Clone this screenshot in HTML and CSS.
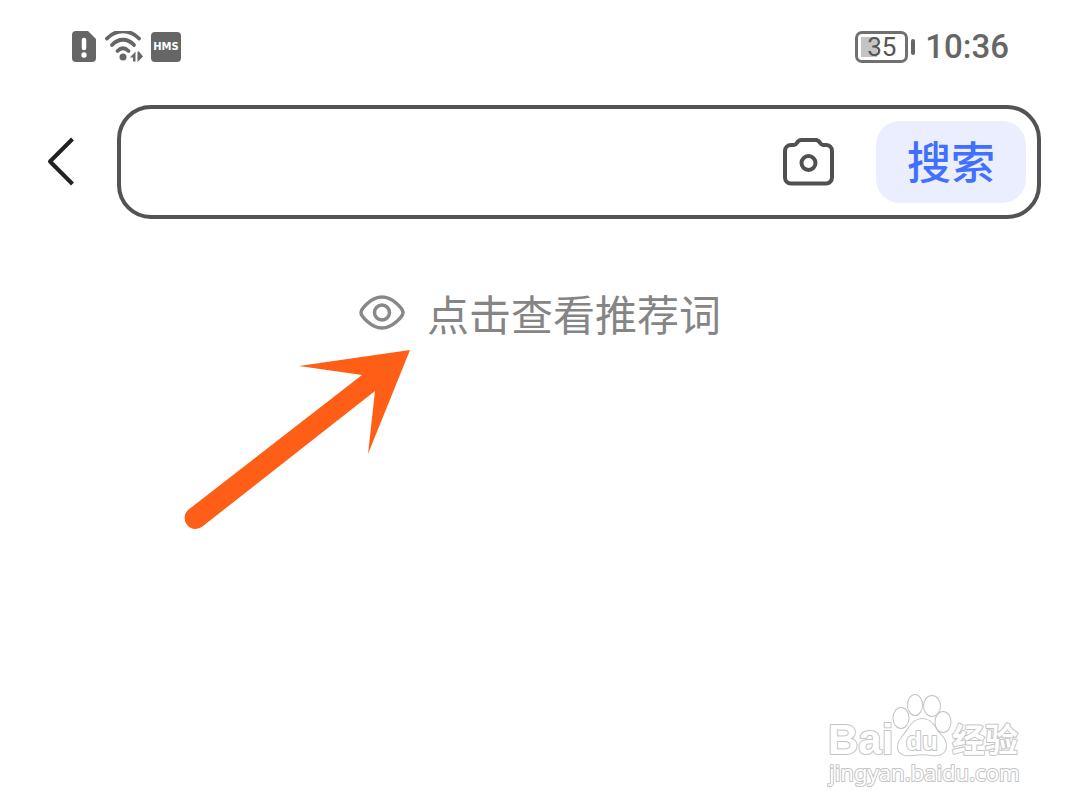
FILE: index.html
```html
<!DOCTYPE html>
<html lang="zh-CN">
  <head>
    <meta charset="UTF-8" />
    <meta name="viewport" content="width=device-width, initial-scale=1.0" />
    <title>搜索</title>
    <link rel="stylesheet" href="styles.css" />
  </head>
  <body>
    <header class="status-bar">
      <div class="status-left">
        <svg width="26" height="32" viewBox="0 0 26 32" aria-hidden="true">
          <path
            d="M5 0H17L25 8V27a4 4 0 0 1-4 4H5a4 4 0 0 1-4-4V4a4 4 0 0 1 4-4z"
            fill="#666"
          />
          <path d="M13 9v8" stroke="#fff" stroke-width="4.500" stroke-linecap="round" />
          <circle cx="13" cy="24" r="2.700" fill="#fff" />
        </svg>
        <svg width="38" height="32" viewBox="0 0 38 32" aria-hidden="true">
          <g fill="none" stroke="#666" stroke-width="3.800" stroke-linecap="round">
            <path d="M2 7.500C11-2 25-2 34 7.500" />
            <path d="M7 14C13.500 7 22.500 7 29 14" />
            <path d="M12.500 20C16 16.500 20 16.500 23.500 20" />
          </g>
          <circle cx="18" cy="26" r="3.500" fill="#666" />
          <path d="M30.500 20.500v10H28v-4h-3zM32.500 20.500H34l4 5-5.500 5.500z" fill="#666" />
        </svg>
        <span class="hms">HMS</span>
      </div>
      <div class="status-right">
        <div class="battery"><span class="battery-box">35</span></div>
        <time class="clock">10:36</time>
      </div>
    </header>

    <main>
      <form class="search-row" onsubmit="return false;">
        <button type="button" class="back" aria-label="返回">
          <svg width="28" height="50" viewBox="0 0 28 50">
            <path d="M25.500 2 3 24.500 25.500 47" fill="none" stroke="#222" stroke-width="4" stroke-linejoin="round" />
          </svg>
        </button>
        <div class="search-box">
          <input type="text" class="search-input" aria-label="搜索" />
          <button type="button" class="camera" aria-label="拍照搜索">
            <svg width="52" height="50" viewBox="0 0 52 50">
              <path
                d="M9 8H12C15 8 15 3 19 3H34C38 3 38 8 41 8H44a6 6 0 0 1 6 6V40.500a6 6 0 0 1-6 6H9a6 6 0 0 1-6-6V14a6 6 0 0 1 6-6z"
                fill="none"
                stroke="#505050"
                stroke-width="4"
              />
              <circle cx="26.500" cy="26" r="7" fill="none" stroke="#505050" stroke-width="4" />
            </svg>
          </button>
          <button type="submit" class="search-button">搜索</button>
        </div>
      </form>

      <button type="button" class="hint">
        <svg width="46" height="36" viewBox="0 0 46 36" aria-hidden="true">
          <path
            d="M2 17.500C2 14 12 2 23 2S44 14 44 17.500 34 33 23 33 2 21 2 17.500z"
            fill="none"
            stroke="#888"
            stroke-width="3.500"
          />
          <circle cx="23" cy="17.500" r="7.500" fill="none" stroke="#888" stroke-width="3.500" />
        </svg>
        <span>点击查看推荐词</span>
      </button>
    </main>

    <svg class="arrow" width="228" height="182" viewBox="0 0 228 182" aria-hidden="true">
      <path
        d="M227 1 116 17 179 26 5 161a10.500 10.500 0 0 0 15 16L192 42 185 105z"
        fill="#ff5e17"
      />
    </svg>

    <svg class="watermark" width="200" height="96" viewBox="0 0 200 96" role="img" aria-label="百度经验">
      <g class="outline">
        <text x="1" y="60" class="brand">Bai</text>
        <ellipse cx="74" cy="24" rx="7.500" ry="10" />
        <ellipse cx="88" cy="11" rx="7" ry="10" />
        <ellipse cx="105" cy="12" rx="8" ry="10" />
        <ellipse cx="116" cy="28" rx="7.500" ry="10" />
        <path d="M95 25C102 25 106 29 109 35C113 41 120 45 119 53C118 61 110 62 105 61C99 60 92 60 86 61C79 62 71 61 71 53C71 45 78 41 81 35C85 29 89 25 95 25z" />
        <text x="79" y="56" class="du">du</text>
        <text x="125" y="58" class="cn">经验</text>
        <text x="2" y="87" class="site">jingyan.baidu.com</text>
      </g>
    </svg>
  </body>
</html>
```
FILE: styles.css
```css
* {
  box-sizing: border-box;
}
body {
  margin: 0;
  position: relative;
  min-height: 100vh;
  background-color: #fff;
  font-family: Roboto, "Noto Sans CJK SC", sans-serif;
}
button {
  padding: 0;
  border: none;
  background: none;
  font-family: inherit;
  cursor: pointer;
}
svg {
  display: block;
}

/* status bar */
.status-bar {
  display: flex;
  justify-content: space-between;
  align-items: center;
  height: 93px;
  padding: 0 71px;
  color: #666;
}
.status-left,
.status-right {
  display: flex;
  align-items: center;
}
.status-left {
  gap: 8px;
}
.hms {
  width: 30px;
  height: 30px;
  border-radius: 4px;
  background-color: #666;
  color: #fff;
  font-family: "DejaVu Sans", sans-serif;
  font-size: 10px;
  font-weight: 700;
  line-height: 30px;
  text-align: center;
}
.status-right {
  gap: 10px;
}
.battery {
  display: flex;
  align-items: center;
  gap: 3px;
}
.battery::after {
  content: "";
  width: 4px;
  height: 16px;
  border-radius: 2px;
  background-color: #666;
}
.battery-box {
  width: 53px;
  height: 32px;
  border: 3px solid #707070;
  border-radius: 7px;
  background: linear-gradient(#c4c4c4, #c4c4c4) 3px 3px / 16px 20px no-repeat;
  color: #555;
  font-size: 26px;
  line-height: 26px;
  text-align: center;
}
.clock {
  font-size: 33px;
  font-weight: 500;
  line-height: 40px;
}

/* search */
.search-row {
  display: flex;
  align-items: center;
  gap: 42px;
  padding: 12px 39px 0 47px;
}
.search-box {
  flex: 1;
  display: flex;
  align-items: center;
  height: 114px;
  padding: 0 11px 0 28px;
  border: 4px solid #535353;
  border-radius: 34px;
}
.search-input {
  flex: 1;
  min-width: 0;
  height: 80px;
  border: none;
  outline: none;
  background: none;
  font-size: 42px;
}
.camera {
  margin-right: 42px;
}
.search-button {
  width: 150px;
  height: 82px;
  padding-bottom: 4px;
  border-radius: 24px;
  background-color: #eaeeff;
  color: #416fff;
  font-family: "Noto Sans CJK SC", sans-serif;
  font-size: 44px;
  font-weight: 500;
}

/* hint */
.hint {
  display: flex;
  align-items: center;
  gap: 22px;
  margin: 64px auto 0;
  color: #858585;
  font-family: "Noto Sans CJK SC", sans-serif;
  font-size: 42px;
  line-height: 60px;
}

.arrow {
  position: absolute;
  top: 349px;
  left: 183px;
  pointer-events: none;
}

/* watermark */
.watermark {
  position: absolute;
  right: 53px;
  bottom: 20px;
}
.outline {
  fill: #fff;
  stroke: #c4c4c4;
  stroke-width: 2px;
  stroke-linejoin: round;
  paint-order: stroke;
}
.brand,
.du {
  font-family: "Liberation Sans", Arial, sans-serif;
  font-weight: 700;
}
.brand {
  font-size: 42px;
}
.du {
  font-size: 26px;
}
.cn {
  font-family: "Noto Sans CJK SC", sans-serif;
  font-size: 33px;
  font-weight: 700;
}
.site {
  font-family: "Noto Sans", sans-serif;
  font-size: 22px;
}
```
